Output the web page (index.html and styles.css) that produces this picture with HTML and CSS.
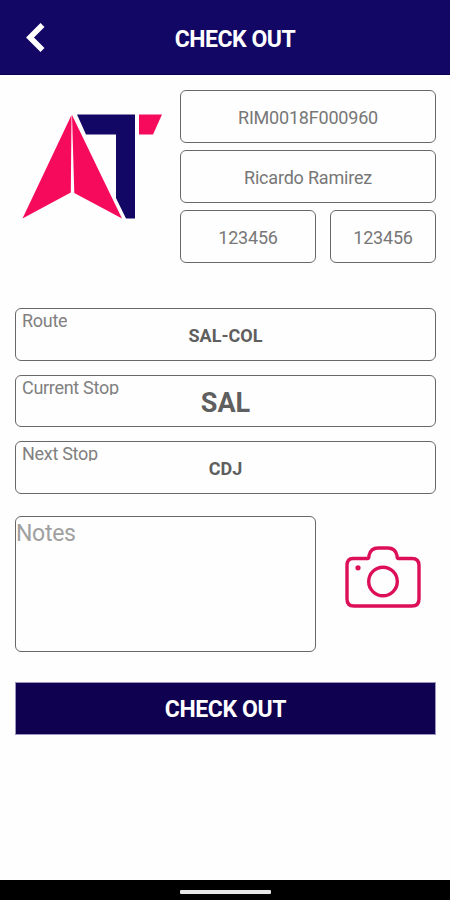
FILE: index.html
```
<!DOCTYPE html>
<html lang="en">
<head>
    <meta charset="UTF-8">
    <meta name="viewport" content="width=device-width, initial-scale=1.0">
    <title>Check Out</title>
    <link rel="stylesheet" href="styles.css">
</head>
<body>
    <header class="header">
        <button class="back" aria-label="Back">
            <svg width="20" height="32" viewBox="0 0 20 32">
                <path d="M17.5 3 L5 15.5 L17.5 28" fill="none" stroke="#fff" stroke-width="5.6"/>
            </svg>
        </button>
        <h1>CHECK OUT</h1>
    </header>

    <main class="content">
        <section class="driver">
            <svg class="logo" width="140" height="105" viewBox="22 114 140 105">
                <path fill="#f60b5c" d="M71.5 115 L70.8 192.5 L22.5 218.5 Z"/>
                <path fill="#f60b5c" d="M72 115 L122 218.5 L74.3 193 Z"/>
                <path fill="#130766" d="M77 114.5 H135 V218.5 H126 L116 198 V134.5 H86 Z"/>
                <path fill="#f60b5c" d="M139 114.5 H162 L153 134.5 H139 Z"/>
            </svg>
            <div class="driver-info">
                <div class="box">RIM0018F000960</div>
                <div class="box">Ricardo Ramirez</div>
                <div class="box">123456</div>
                <div class="box">123456</div>
            </div>
        </section>

        <section class="stops">
            <div class="box field">
                <span class="label">Route</span>
                <strong>SAL-COL</strong>
            </div>
            <div class="box field current">
                <span class="label">Current Stop</span>
                <strong>SAL</strong>
            </div>
            <div class="box field">
                <span class="label">Next Stop</span>
                <strong>CDJ</strong>
            </div>
        </section>

        <section class="extras">
            <textarea class="notes" placeholder="Notes"></textarea>
            <button class="camera" aria-label="Take photo">
                <svg width="76" height="62" viewBox="0 0 76 62" fill="none" stroke="#dc0f58" stroke-width="3.4">
                    <path d="M8 12.5 H22.5 C24 12.5 24 11 24 9.5 C25 5 28 2 33 2 H43 C48 2 51 5 52 9.5 C52 11 52 12.5 53.5 12.5 H67 Q74 12.5 74 19.5 V53 Q74 60 67 60 H9 Q2 60 2 53 V19.5 Q2 12.5 8 12.5 Z"/>
                    <circle cx="38" cy="35.5" r="14.3"/>
                    <circle cx="13" cy="21.8" r="2.6" fill="#dc0f58" stroke="none"/>
                </svg>
            </button>
        </section>

        <button class="btn">CHECK OUT</button>
    </main>

    <footer class="navbar">
        <div class="handle"></div>
    </footer>
</body>
</html>
```
FILE: styles.css
```
:root {
    --primary-color: #130766;
    --border-color: #686868;
    --text-color: #777;
}

* {
    box-sizing: border-box;
    margin: 0;
    padding: 0;
}

body {
    font-family: Roboto, sans-serif;
    background-color: #fefefe;
    color: var(--text-color);
    display: flex;
    flex-direction: column;
    height: 100vh;
    overflow: hidden;
}

button {
    font-family: inherit;
    border: none;
    background: none;
    cursor: pointer;
}

.header {
    display: grid;
    grid-template-columns: 70px 1fr 50px;
    align-items: center;
    height: 75px;
    background-color: var(--primary-color);
    border-bottom: 1px solid #090050;
    color: white;
}

.back {
    display: flex;
    padding-top: 2px;
    padding-left: 25px;
}

.header h1 {
    padding-top: 4px;
    font-size: 23px;
    line-height: 27px;
    letter-spacing: -0.5px;
    text-align: center;
}

.content {
    flex: 1;
    padding: 15px 14px 0 15px;
}

.driver {
    display: flex;
    justify-content: space-between;
    padding-left: 7px;
}

.logo {
    margin-top: 24px;
}

.driver-info {
    display: grid;
    grid-template-columns: 136px 106px;
    gap: 7px 14px;
    width: 256px;
}

.box {
    display: flex;
    justify-content: center;
    align-items: center;
    height: 53px;
    padding-top: 2px;
    border: 1px solid var(--border-color);
    border-radius: 6px;
    font-size: 18px;
    letter-spacing: -0.2px;
}

.driver-info .box:nth-child(-n+2) {
    grid-column: span 2;
}

.stops {
    display: flex;
    flex-direction: column;
    gap: 14px;
    margin-top: 45px;
}

.field {
    position: relative;
    color: #5f5f5f;
}

.field strong {
    letter-spacing: 0;
}

.field.current {
    height: 52px;
    padding-top: 4px;
}

.current strong {
    font-size: 27px;
}

.label {
    position: absolute;
    top: 2px;
    left: 6px;
    height: 17px;
    overflow: hidden;
    line-height: 20px;
    letter-spacing: -0.3px;
    color: #808080;
}

.extras {
    display: flex;
    align-items: center;
    gap: 29px;
    margin-top: 22px;
}

.notes {
    width: 301px;
    height: 136px;
    border: 1px solid var(--border-color);
    border-radius: 6px;
    background: none;
    font-family: inherit;
    font-size: 23px;
    line-height: 34px;
    letter-spacing: -0.3px;
    resize: none;
}

.notes::placeholder {
    color: #a0a0a0;
}

.camera {
    display: flex;
    margin-top: -15px;
}

.btn {
    width: 100%;
    height: 53px;
    margin-top: 30px;
    padding-top: 2px;
    border: 1px solid #9c96bf;
    background-color: #100050;
    color: white;
    font-size: 23px;
    font-weight: bold;
    letter-spacing: -0.4px;
}

.navbar {
    height: 20px;
    padding-top: 10px;
    background-color: black;
}

.handle {
    width: 91px;
    height: 4px;
    margin: 0 auto;
    border-radius: 1px;
    background-color: #e8e8e8;
}
```
